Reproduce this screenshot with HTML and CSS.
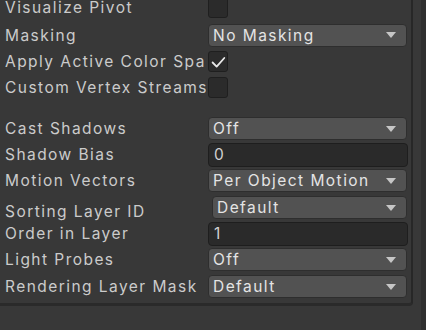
FILE: index.html
```html
<!DOCTYPE html>
<html>
<head>
<meta charset="utf-8">
<link rel="stylesheet" href="styles.css">
</head>
<body>
<div class="screen">
  <div class="panel">
    <div class="row"><span class="label">Visualize Pivot</span><span class="check"></span></div>
    <div class="row"><span class="label">Masking</span><span class="dropdown"><span class="dd-text">No Masking</span><span class="arrow"></span></span></div>
    <div class="row"><span class="label">Apply Active Color Space</span><span class="check"><svg viewBox="0 0 20 21" width="20" height="21"><path d="M4 10.5 L8.5 15 L17 5.5" fill="none" stroke="#e8e8e8" stroke-width="2" stroke-linecap="round" stroke-linejoin="round"/></svg></span></div>
    <div class="row"><span class="label">Custom Vertex Streams</span><span class="check"></span></div>
    <div class="spacer"></div>
    <div class="row"><span class="label">Cast Shadows</span><span class="dropdown"><span class="dd-text">Off</span><span class="arrow"></span></span></div>
    <div class="row"><span class="label">Shadow Bias</span><span class="field">0</span></div>
    <div class="row"><span class="label">Motion Vectors</span><span class="dropdown"><span class="dd-text">Per Object Motion</span><span class="arrow"></span></span></div>
    <div class="row sorting"><span class="label">Sorting Layer ID</span><span class="dropdown"><span class="dd-text">Default</span><span class="arrow"></span></span></div>
    <div class="row"><span class="label">Order in Layer</span><span class="field">1</span></div>
    <div class="row"><span class="label">Light Probes</span><span class="dropdown"><span class="dd-text">Off</span><span class="arrow"></span></span></div>
    <div class="row"><span class="label">Rendering Layer Mask</span><span class="dropdown"><span class="dd-text">Default</span><span class="arrow"></span></span></div>
  </div>
  <div class="gutter"></div>
  <div class="scroll"></div>
</div>
</body>
</html>
```
FILE: styles.css
```css
html, body {
  margin: 0;
  padding: 0;
  background: #383838;
  width: 426px;
  height: 330px;
  overflow: hidden;
}
.screen {
  display: flex;
  height: 330px;
  font-family: Inter, "Noto Sans", sans-serif;
  font-size: 15.5px;
  letter-spacing: 1.45px;
}
.panel {
  width: 413px;
  height: 312px;
  box-sizing: border-box;
  border-right: 2px solid #272727;
  border-bottom: 3px solid #2a2a2a;
  border-bottom-right-radius: 4px;
  margin-top: -6px;
  display: grid;
  grid-template-rows: 27px 28px 25px 27px 14px 27px 25px 27px 27px 25px 27px 27px;
}
.gutter {
  width: 8px;
}
.scroll {
  width: 5px;
  background: #2f2f2f;
}
.row {
  display: flex;
  align-items: center;
}
.label {
  width: 201px;
  margin-right: 2px;
  padding-left: 5px;
  flex: none;
  white-space: nowrap;
  overflow: hidden;
  color: #cbcbcb;
}
.check {
  width: 18px;
  height: 19px;
  background: #2b2b2b;
  border: 1px solid #1f1f1f;
  border-radius: 3px;
  display: flex;
}
.dropdown {
  width: 199px;
  height: 23px;
  box-sizing: border-box;
  background: #525252;
  border: 1px solid #2e2e2e;
  border-radius: 4px;
  display: flex;
  align-items: center;
  justify-content: space-between;
  padding: 0 10px 0 4px;
  color: #e4e4e4;
}
.arrow {
  width: 0;
  height: 0;
  border-left: 5px solid transparent;
  border-right: 5px solid transparent;
  border-top: 6px solid #c6c6c6;
}
.field {
  width: 200px;
  height: 24px;
  box-sizing: border-box;
  background: #2a2a2a;
  border: 1px solid #1e1e1e;
  border-radius: 4px;
  display: flex;
  align-items: center;
  padding-left: 5px;
  color: #d2d2d2;
}
.sorting .label {
  padding-top: 7px;
}
.sorting .dropdown {
  margin-left: 4px;
  width: 195px;
}
```
